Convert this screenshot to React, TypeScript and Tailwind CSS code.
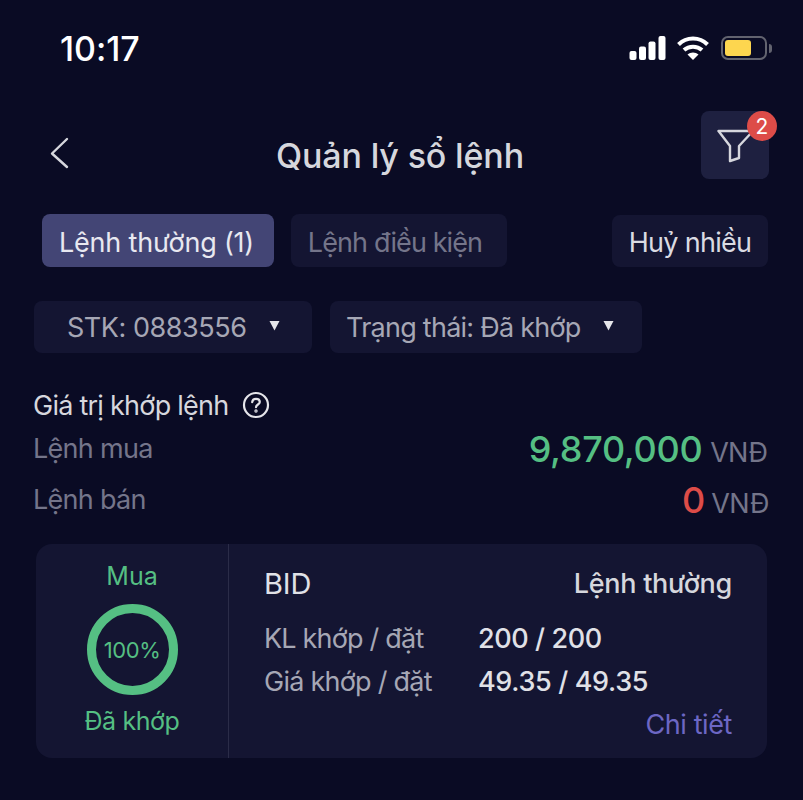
import React from 'react';

const font = { fontFamily: 'Inter, "Noto Sans", sans-serif' };

const StatusBar = () => (
  <div className="flex items-center justify-between h-[34px] pl-[60px] pr-[31px]">
    <span className="text-[34px] font-medium text-white leading-none tracking-[-0.05px] mt-[1px]">10:17</span>
    <div className="flex items-center">
      <svg width="37" height="24" viewBox="0 0 36 24" fill="#fff">
        <rect x="0" y="15" width="7" height="9" rx="2" />
        <rect x="9.5" y="10.5" width="7" height="13.5" rx="2" />
        <rect x="19" y="5.5" width="7" height="18.5" rx="2" />
        <rect x="29" y="0" width="7" height="24" rx="2" />
      </svg>
      <svg className="ml-[11px]" width="32" height="24" viewBox="0 0 32 24" fill="none" stroke="#fff" strokeWidth="4">
        <path d="M1.5 8.5C9.5 0.5 22.5 0.5 30.5 8.5" />
        <path d="M7 14C12 9.5 20 9.5 25 14" />
        <path d="M16 24L10.5 18.5C13.5 15.8 18.5 15.8 21.5 18.5Z" fill="#fff" stroke="none" />
      </svg>
      <div className="ml-[12px] w-[46px] h-[24px] rounded-[7px] border-2 border-[#62636f] p-[2px]">
        <div className="w-[26px] h-full rounded-[3px] bg-[#fdd64f]" />
      </div>
      <div className="ml-[2px] w-[3px] h-[9px] rounded-r-full bg-[#62636f]" />
    </div>
  </div>
);

const Header = () => (
  <div className="flex items-start justify-between mt-[46px] pl-[49px] pr-[34px]">
    <svg className="mt-[26px]" width="20" height="32" viewBox="0 0 20 32" fill="none" stroke="#d6d7dd" strokeWidth="2.4" strokeLinecap="round" strokeLinejoin="round">
      <path d="M18 2L3 16.5L18 30" />
    </svg>
    <span className="text-[34px] font-medium text-[#d6d7dd] leading-none mt-[28px] ml-[30px] tracking-[-0.15px]">Quản lý sổ lệnh</span>
    <div className="relative w-[68px] h-[68px] rounded-[8px] bg-[#1e2040]">
      <svg className="absolute left-[16px] top-[16px]" width="38" height="36" viewBox="0 0 38 36" fill="none" stroke="#d6d7dd" strokeWidth="2.4" strokeLinejoin="round">
        <path d="M1.5 4H36L22 19V31L13 34V19Z" />
      </svg>
      <div className="absolute top-0 -right-[8px] w-[30px] h-[30px] rounded-full bg-[#dd4c48] flex items-center justify-center text-white text-[21px] leading-none">2</div>
    </div>
  </div>
);

const Tabs = () => (
  <div className="flex items-center mt-[35px] pl-[42px] pr-[35px] text-[27px] leading-none">
    <div className="w-[232px] h-[53px] flex items-center justify-center rounded-[8px] bg-[#434575] text-[#e8e8f0] tracking-[-0.2px] pr-[3px] pt-[3px]">Lệnh thường (1)</div>
    <div className="ml-[17px] w-[216px] h-[53px] flex items-center justify-center rounded-[8px] bg-[#141532] text-[#74758a] tracking-[-0.9px] pr-[8px] pt-[3px]">Lệnh điều kiện</div>
    <div className="ml-auto w-[156px] h-[52px] flex items-center justify-center rounded-[8px] bg-[#141532] text-[#dadbe2] tracking-[-0.7px] pt-[3px]">Huỷ nhiều</div>
  </div>
);

const Select = ({ label, width, tracking, gap }: { label: string; width: string; tracking: string; gap: string }) => (
  <div className={`${width} h-[52px] flex items-center rounded-[8px] bg-[#141532] text-[#a6a7b5]`}>
    <span className={`${tracking} pt-[1px]`}>{label}</span>
    <svg className={`${gap} mb-[4px]`} width="11" height="11" viewBox="0 0 11 11" fill="#e5e5ea">
      <path d="M0.5 1H10.5L5.5 10.5Z" />
    </svg>
  </div>
);

const Summary = () => (
  <div className="mt-[38px] pl-[33px] pr-[34px] text-[27px] leading-none">
    <div className="flex items-center text-[#d6d7dd] tracking-[-0.75px]">
      <span>Giá trị khớp lệnh</span>
      <svg className="ml-[14px]" width="28" height="28" viewBox="0 0 28 28" fill="none" stroke="#e5e5ea" strokeWidth="2.2" strokeLinecap="round">
        <circle cx="14" cy="14" r="12" />
        <path d="M10.2 11.2C10.4 8.9 12 7.8 14 7.8C16.2 7.8 17.8 9.2 17.8 11C17.8 13.4 14 13.6 14 16.2" />
        <circle cx="14" cy="20" r="0.6" />
      </svg>
    </div>
    <div className="flex items-end justify-between mt-[7px] h-[44px]">
      <span className="text-[#74758a] mb-[8px] tracking-[-0.7px]">Lệnh mua</span>
      <div className="flex items-baseline mb-[3px] pr-[2px]">
        <span className="text-[36px] font-medium text-[#55bf83] tracking-[-0.3px]">9,870,000</span>
        <span className="ml-[8px] text-[#74758a] tracking-[-0.9px]">VNĐ</span>
      </div>
    </div>
    <div className="flex items-end justify-between mt-[7px] h-[44px]">
      <span className="text-[#74758a] mb-[8px] tracking-[-0.7px]">Lệnh bán</span>
      <div className="flex items-baseline mb-[3px]">
        <span className="text-[36px] font-medium text-[#dd4c48]">0</span>
        <span className="ml-[6px] text-[#74758a] tracking-[-0.5px]">VNĐ</span>
      </div>
    </div>
  </div>
);

const OrderCard = () => (
  <div className="flex mt-[23px] mx-[36px] w-[731px] h-[214px] rounded-[16px] bg-[#141532] leading-none">
    <div className="w-[193px] shrink-0 border-r border-[#2b2c48] flex flex-col items-center pt-[20px] text-[#55bf83] text-[25px]">
      <span>Mua</span>
      <div className="mt-[15px] w-[91px] h-[91px] rounded-full border-[9px] border-[#55bf83] flex items-center justify-center text-[22px] tracking-[-0.4px]">100%</div>
      <span className="mt-[14px] tracking-[-0.4px]">Đã khớp</span>
    </div>
    <div className="flex-1 pl-[35px] pr-[35px] pt-[25px] text-[27px]">
      <div className="flex items-center justify-between">
        <span className="text-[29px] text-[#e0e1e7] tracking-[-0.1px]">BID</span>
        <span className="font-medium text-[#d6d7dd] tracking-[-0.3px]">Lệnh thường</span>
      </div>
      <div className="flex mt-[27px]">
        <span className="w-[214px] text-[#a6a7b5] tracking-[-0.8px]">KL khớp / đặt</span>
        <span className="font-medium text-[#e0e1e7] tracking-[-0.4px]">200 / 200</span>
      </div>
      <div className="flex mt-[16px]">
        <span className="w-[214px] text-[#a6a7b5] tracking-[-0.75px]">Giá khớp / đặt</span>
        <span className="font-medium text-[#e0e1e7] tracking-[-0.35px]">49.35 / 49.35</span>
      </div>
      <div className="flex justify-end mt-[16px] text-[#6d67c4] tracking-[-0.4px]">Chi tiết</div>
    </div>
  </div>
);

export default function App() {
  return (
    <div className="w-[803px] h-[800px] overflow-hidden bg-[#0a0b24] pt-[31px]" style={font}>
      <StatusBar />
      <Header />
      <Tabs />
      <div className="flex mt-[34px] pl-[34px] gap-[18px] text-[27px] leading-none">
        <Select label="STK: 0883556" width="w-[278px] pl-[33px]" tracking="tracking-[-0.45px]" gap="ml-[22px]" />
        <Select label="Trạng thái: Đã khớp" width="w-[312px] pl-[16px]" tracking="tracking-[-0.75px]" gap="ml-[22px]" />
      </div>
      <Summary />
      <OrderCard />
    </div>
  );
}
